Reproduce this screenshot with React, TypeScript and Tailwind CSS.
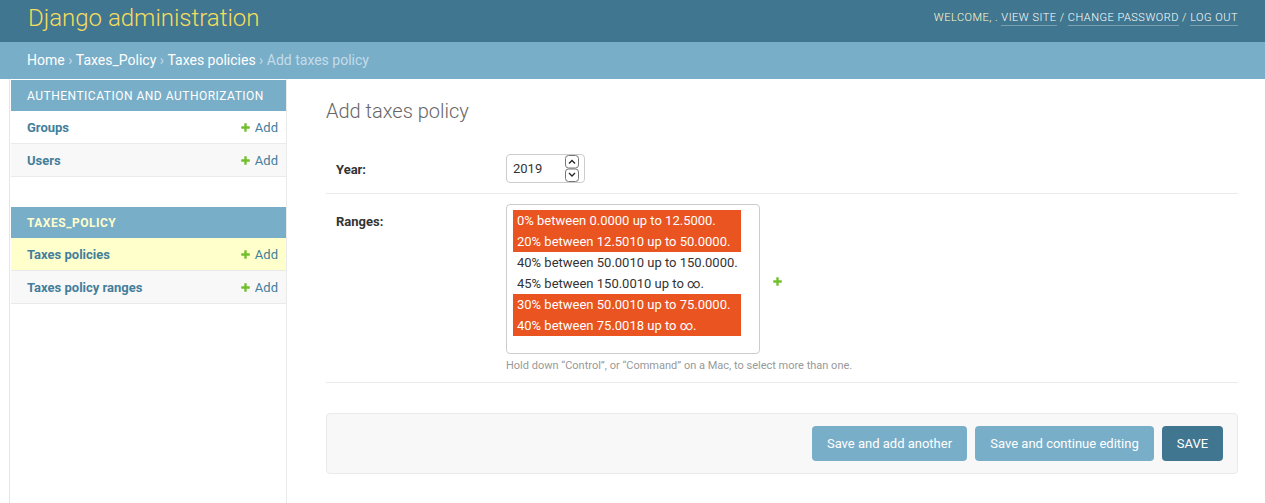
import React from "react";

const PlusIcon = ({ size = 10, color = "#70bf2b" }: { size?: number; color?: string }) => (
  <svg width={size} height={size} viewBox="0 0 1792 1792" className="shrink-0">
    <path
      fill={color}
      d="M1600 796v192q0 40-28 68t-68 28h-416v416q0 40-28 68t-68 28h-192q-40 0-68-28t-28-68v-416h-416q-40 0-68-28t-28-68v-192q0-40 28-68t68-28h416v-416q0-40 28-68t68-28h192q40 0 68 28t28 68v416h416q40 0 68 28t28 68z"
    />
  </svg>
);

const Spinner = () => (
  <svg width="14" height="27" viewBox="0 0 14 27" className="shrink-0">
    <rect x="0.5" y="0.5" width="13" height="12.5" rx="3" fill="#fff" stroke="#767676" />
    <rect x="0.5" y="14" width="13" height="12.5" rx="3" fill="#fff" stroke="#767676" />
    <path d="M4 8.5 L7 5.5 L10 8.5" fill="none" stroke="#222" strokeWidth="1.3" />
    <path d="M4 18 L7 21 L10 18" fill="none" stroke="#222" strokeWidth="1.3" />
  </svg>
);

type Row = { name: string; current?: boolean; alt?: boolean };

const Module = ({ title, rows, current }: { title: string; rows: Row[]; current?: boolean }) => (
  <div className="mb-[30px]">
    <div
      className={`bg-[#79aec8] h-[31px] pl-[16px] flex items-center text-[12px] tracking-[0.5px] uppercase ${
        current ? "text-[#ffffcc] font-bold" : "text-white"
      }`}
    >
      {title}
    </div>
    {rows.map((r) => (
      <div
        key={r.name}
        className={`h-[33px] border-b border-[#eaeaea] flex items-center justify-between pl-[16px] pr-[8px] text-[13px] pt-[1px] ${
          r.current ? "bg-[#ffffcc]" : r.alt ? "bg-[#f8f8f8]" : "bg-white"
        }`}
      >
        <span className="font-bold text-[#447e9b]">{r.name}</span>
        <span className="flex items-center gap-[4px] text-[#447e9b]">
          <PlusIcon size={11} />
          Add
        </span>
      </div>
    ))}
  </div>
);

const options: { text: string; selected: boolean }[] = [
  { text: "0% between 0.0000 up to 12.5000.", selected: true },
  { text: "20% between 12.5010 up to 50.0000.", selected: true },
  { text: "40% between 50.0010 up to 150.0000.", selected: false },
  { text: "45% between 150.0010 up to \u221E.", selected: false },
  { text: "30% between 50.0010 up to 75.0000.", selected: true },
  { text: "40% between 75.0018 up to \u221E.", selected: true },
];

export default function App() {
  return (
    <div className="font-['Roboto','Liberation_Sans',sans-serif] text-[#333] bg-white w-[1265px] min-h-[503px]">
      {/* Header */}
      <div className="bg-[#417690] h-[42px] flex items-center justify-between pl-[28px] pr-[27px]">
        <div className="text-[24px] font-light text-[#f5dd5d] leading-none -mt-[6px]">Django administration</div>
        <div className="text-[11px] tracking-[0.5px] uppercase text-[#ffffcc] font-light flex items-center -mt-[6px]">
          <span>Welcome, .&nbsp;</span>
          <span className="text-white border-b border-[rgba(255,255,255,0.3)] leading-[14px]">View site</span>
          <span>&nbsp;/&nbsp;</span>
          <span className="text-white border-b border-[rgba(255,255,255,0.3)] leading-[14px]">Change password</span>
          <span>&nbsp;/&nbsp;</span>
          <span className="text-white border-b border-[rgba(255,255,255,0.3)] leading-[14px]">Log out</span>
        </div>
      </div>
      {/* Breadcrumbs */}
      <div className="bg-[#79aec8] h-[37px] flex items-center pl-[27px] text-[14px] text-[#c4dce8]">
        <span className="text-white">Home</span>
        <span>&nbsp;›&nbsp;</span>
        <span className="text-white">Taxes_Policy</span>
        <span>&nbsp;›&nbsp;</span>
        <span className="text-white">Taxes policies</span>
        <span>&nbsp;›&nbsp;</span>
        <span>Add taxes policy</span>
      </div>
      {/* Main */}
      <div className="flex min-h-[424px]">
        <div className="w-[10px] border-r border-[#e6e6e6] shrink-0" />
        <div className="w-[277px] shrink-0 border-r border-[#eaeaea] pl-[1px] pt-[1px]">
          <Module
            title="Authentication and Authorization"
            rows={[{ name: "Groups" }, { name: "Users", alt: true }]}
          />
          <Module
            title="Taxes_Policy"
            current
            rows={[{ name: "Taxes policies", current: true }, { name: "Taxes policy ranges", alt: true }]}
          />
        </div>
        <div className="flex-1 pl-[39px] pr-[27px] pt-[20px]">
          <h1 className="text-[20px] font-light text-[#666] leading-[24px] mb-[20px]">Add taxes policy</h1>
          <div>
            {/* Year row */}
            <div className="flex px-[10px] pt-[11px] pb-[10px] border-b border-[#eaeaea]">
              <div className="w-[170px] pt-[8px] text-[13px] font-bold leading-[16px] text-[#333]">Year:</div>
              <div className="w-[79px] h-[29px] border border-[#cccccc] rounded-[4px] flex items-center justify-between pl-[6px] pr-[5px] text-[13px] text-[#333]">
                <span>2019</span>
                <Spinner />
              </div>
            </div>
            {/* Ranges row */}
            <div className="flex px-[10px] pt-[10px] pb-[9px] border-b border-[#eaeaea]">
              <div className="w-[170px] pt-[10px] text-[13px] font-bold leading-[16px] text-[#333]">Ranges:</div>
              <div>
                <div className="flex items-center">
                  <div className="w-[254px] h-[150px] border border-[#cccccc] rounded-[4px] pl-[6px] pt-[5px] pr-[18px]">
                    {options.map((o, i) => (
                      <div
                        key={i}
                        className={`h-[21px] pl-[4px] flex items-center text-[13px] whitespace-nowrap ${
                          o.selected ? "bg-[#e95420] text-white" : "text-[#333]"
                        }`}
                      >
                        {o.text}
                      </div>
                    ))}
                  </div>
                  <div className="ml-[12px] mt-[4px]">
                    <PlusIcon size={11} />
                  </div>
                </div>
                <div className="text-[11px] text-[#999] mt-[5px] leading-[14px]">
                  Hold down “Control”, or “Command” on a Mac, to select more than one.
                </div>
              </div>
            </div>
          </div>
          {/* Submit row */}
          <div className="mt-[30px] h-[61px] bg-[#f8f8f8] border border-[#eaeaea] rounded-[4px] flex items-center justify-end gap-[8px] pr-[14px]">
            <div className="h-[35px] bg-[#79aec8] rounded-[4px] text-white text-[13px] flex items-center w-[155px] justify-center whitespace-nowrap">
              Save and add another
            </div>
            <div className="h-[35px] bg-[#79aec8] rounded-[4px] text-white text-[13px] flex items-center w-[179px] justify-center whitespace-nowrap">
              Save and continue editing
            </div>
            <div className="h-[35px] bg-[#417690] rounded-[4px] text-white text-[13px] flex items-center w-[61px] justify-center">
              SAVE
            </div>
          </div>
        </div>
      </div>
    </div>
  );
}
